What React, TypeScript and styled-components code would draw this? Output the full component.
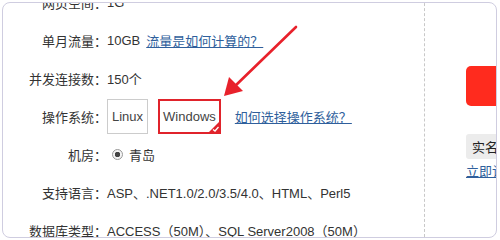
import React from "react"
import styled, { createGlobalStyle } from "styled-components"

const GlobalStyle = createGlobalStyle`
    html, body {
        margin: 0;
        padding: 0;
        background: #fff;
    }
    body {
        font-family: "Liberation Sans", "Noto Sans CJK SC", sans-serif;
        font-size: 13px;
        color: #333;
    }
`

type RowType = {
    label: string
    children: React.ReactNode
}

const Row = (props: RowType) => {
    return (
        <StyledRow>
            <Label>{props.label}：</Label>
            <Value>{props.children}</Value>
        </StyledRow>
    )
}

const Arrow = () => (
    <ArrowSvg width="500" height="240" viewBox="0 0 500 240">
        <line x1="296" y1="27" x2="234" y2="87" stroke="#e8212b" strokeWidth="2.6" strokeLinecap="round" />
        <polygon points="224,96 229,77 243,91" fill="#e8212b" />
    </ArrowSvg>
)

export default function App() {
    return (
        <Page>
            <GlobalStyle />
            <Card>
                <Main>
                    <Row label="网页空间">1G</Row>
                    <Row label="单月流量">
                        10GB<Link>流量是如何计算的？</Link>
                    </Row>
                    <Row label="并发连接数">150个</Row>
                    <Row label="操作系统">
                        <OsOption>Linux</OsOption>
                        <OsOption active>
                            Windows
                            <Corner>
                                <svg width="12" height="12" viewBox="0 0 12 12">
                                    <polygon points="12,0 12,12 0,12" fill="#e0232b" />
                                    <polyline points="5,8.5 7,10 10.5,6" fill="none" stroke="#fff" strokeWidth="1.3" />
                                </svg>
                            </Corner>
                        </OsOption>
                        <Link>如何选择操作系统？</Link>
                    </Row>
                    <Row label="机房">
                        <Radio />
                        青岛
                    </Row>
                    <Row label="支持语言">ASP、.NET1.0/2.0/3.5/4.0、HTML、Perl5</Row>
                    <Row label="数据库类型">ACCESS（50M）、SQL Server2008（50M）</Row>
                </Main>
                <Side>
                    <BuyButton />
                    <Verify>实名认证</Verify>
                    <Link>立即认证</Link>
                </Side>
            </Card>
            <Arrow />
        </Page>
    )
}

const Page = styled.div`
    position: relative;
    width: 500px;
    height: 240px;
    overflow: hidden;
    padding: 2px 3px 2px 2px;
    box-sizing: border-box;
`
const Card = styled.div`
    display: flex;
    height: 100%;
    border: 1px solid #cfcde0;
    border-radius: 8px;
    overflow: hidden;
    box-sizing: border-box;
`
const Main = styled.div`
    width: 421px;
    margin-top: -20px;
    border-right: 1px dashed #c8c8c8;
    flex-shrink: 0;
`
const StyledRow = styled.div`
    display: flex;
    align-items: center;
    height: 38px;
    white-space: nowrap;
`
const Label = styled.div`
    width: 104px;
    text-align: right;
    flex-shrink: 0;
`
const Value = styled.div`
    display: flex;
    align-items: center;
`
const Link = styled.a`
    color: #2f5f9c;
    text-decoration: underline;
    margin-left: 6px;
    cursor: pointer;
`
const OsOption = styled.div<{ active?: boolean }>`
    position: relative;
    height: 35px;
    box-sizing: border-box;
    padding: 0 ${(p) => (p.active ? "3px" : "4px")};
    margin-right: ${(p) => (p.active ? "8px" : "10px")};
    display: flex;
    align-items: center;
    border: ${(p) => (p.active ? "2px solid #e0232b" : "1px solid #ccc")};
    color: #444;
`
const Corner = styled.span`
    position: absolute;
    right: -1px;
    bottom: -1px;
    width: 12px;
    height: 12px;
    line-height: 0;
`
const Radio = styled.span`
    width: 9px;
    height: 9px;
    border-radius: 50%;
    border: 1px solid #999;
    background: radial-gradient(circle, #444 0 2.5px, #f4f4f4 3px);
    margin: 0 6px 0 5px;
`
const Side = styled.div`
    flex: 1;
    padding: 63px 0 0 41px;
    display: flex;
    flex-direction: column;
    align-items: flex-start;
    white-space: nowrap;

    & > a {
        margin-left: 0;
        margin-top: 2px;
    }
`
const BuyButton = styled.div`
    width: 80px;
    height: 40px;
    background: #ff2b1e;
    border-radius: 5px;
`
const Verify = styled.div`
    margin-top: 28px;
    padding: 3px 6px;
    background: #ececec;
    border-radius: 3px;
    color: #222;
`
const ArrowSvg = styled.svg`
    position: absolute;
    left: 0;
    top: 0;
    pointer-events: none;
`
